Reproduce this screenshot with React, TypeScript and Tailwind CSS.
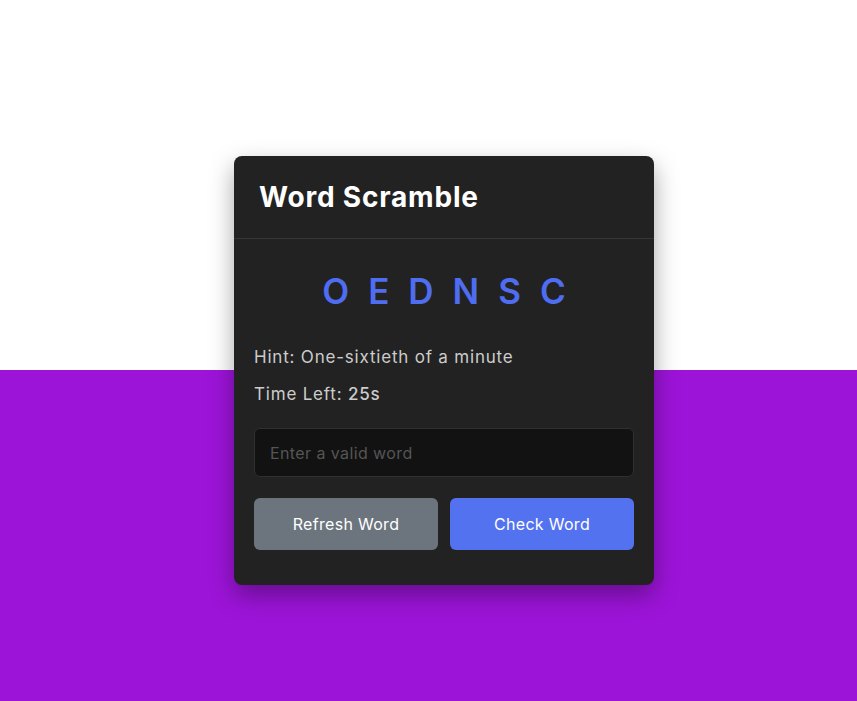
export default function App() {
  return (
    <div
      className="min-h-[701px] w-full bg-[linear-gradient(to_bottom,#ffffff_370px,#9c14d8_370px)] pt-[156px] pl-[31px] flex justify-center"
      style={{ fontFamily: 'Inter, "Open Sans", sans-serif' }}
    >
      <div className="w-[420px] h-[429px] rounded-[8px] bg-[#222222] shadow-[0_10px_25px_rgba(0,0,0,0.35)]">
        <h2 className="h-[83px] px-[25px] flex items-center text-[28px] font-bold tracking-[0.8px] text-white border-b border-[#363636]">
          Word Scramble
        </h2>
        <div className="px-[20px] pt-[27px]">
          <p className="text-center text-[35px] font-semibold leading-[50px] tracking-[19px] pl-[19px] text-[#4f6df0]">
            OEDNSC
          </p>
          <div className="mt-[29px] space-y-[13px] text-[17px] leading-[24px] tracking-[0.8px] text-[#cccccc]">
            <p>Hint: One-sixtieth of a minute</p>
            <p>
              Time Left: <span className="font-medium">25s</span>
            </p>
          </div>
          <input
            type="text"
            placeholder="Enter a valid word"
            className="mt-[22px] w-full h-[49px] rounded-[6px] bg-[#121212] border border-[#303030] px-[15px] text-[16px] tracking-[0.4px] text-white placeholder:text-[#555555] outline-none"
          />
          <div className="mt-[21px] flex gap-[12px]">
            <button className="flex-1 h-[52px] rounded-[6px] bg-[#6c757d] text-white text-[16px] tracking-[0.3px]">
              Refresh Word
            </button>
            <button className="flex-1 h-[52px] rounded-[6px] bg-[#5372f0] text-white text-[16px] tracking-[0.3px]">
              Check Word
            </button>
          </div>
        </div>
      </div>
    </div>
  );
}
